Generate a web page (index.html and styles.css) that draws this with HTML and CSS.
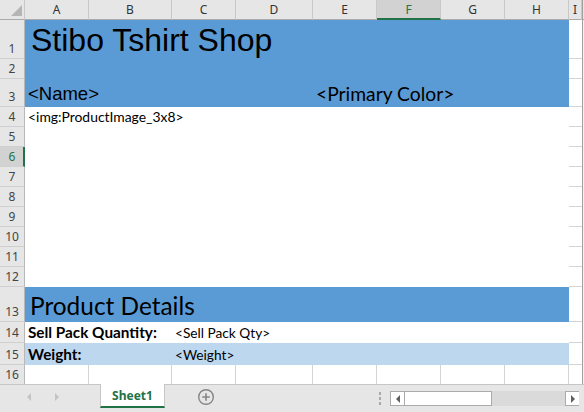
FILE: index.html
```html
<!DOCTYPE html>
<html>
<head>
<meta charset="utf-8">
<link rel="stylesheet" href="styles.css">
</head>
<body>
<div class="app">
  <div class="sheet">
    <div class="row row-head">
      <div class="corner"><svg width="25" height="19" viewBox="0 0 25 19"><polygon points="22,5 22,16 11,16" fill="#b5b5b5"/></svg></div>
      <div class="ch">A</div><div class="ch">B</div><div class="ch">C</div><div class="ch">D</div>
      <div class="ch">E</div><div class="ch ch-sel">F</div><div class="ch">G</div><div class="ch">H</div>
      <div class="ch">I</div><div class="edge-h"></div>
    </div>

    <div class="row row-1">
      <div class="rh">1</div>
      <div class="fill blue"><span class="t-title">Stibo Tshirt Shop</span></div>
      <div class="ci"></div><div class="edge"></div>
    </div>
    <div class="row row-std">
      <div class="rh">2</div>
      <div class="fill blue"></div>
      <div class="ci"></div><div class="edge"></div>
    </div>
    <div class="row row-3">
      <div class="rh">3</div>
      <div class="fill blue split">
        <span class="t-name">&lt;Name&gt;</span>
        <span class="t-color">&lt;Primary Color&gt;</span>
      </div>
      <div class="ci"></div><div class="edge"></div>
    </div>
    <div class="row row-std">
      <div class="rh">4</div>
      <div class="fill white top"><span class="t-img">&lt;img:ProductImage_3x8&gt;</span></div>
      <div class="ci"></div><div class="edge"></div>
    </div>
    <div class="row row-std">
      <div class="rh">5</div><div class="fill white"></div><div class="ci"></div><div class="edge"></div>
    </div>
    <div class="row row-std">
      <div class="rh rh-sel">6</div><div class="fill white"></div><div class="ci"></div><div class="edge"></div>
    </div>
    <div class="row row-std">
      <div class="rh">7</div><div class="fill white"></div><div class="ci"></div><div class="edge"></div>
    </div>
    <div class="row row-std">
      <div class="rh">8</div><div class="fill white"></div><div class="ci"></div><div class="edge"></div>
    </div>
    <div class="row row-std">
      <div class="rh">9</div><div class="fill white"></div><div class="ci"></div><div class="edge"></div>
    </div>
    <div class="row row-std">
      <div class="rh">10</div><div class="fill white"></div><div class="ci"></div><div class="edge"></div>
    </div>
    <div class="row row-std">
      <div class="rh">11</div><div class="fill white"></div><div class="ci"></div><div class="edge"></div>
    </div>
    <div class="row row-std">
      <div class="rh">12</div><div class="fill white"></div><div class="ci"></div><div class="edge"></div>
    </div>
    <div class="row row-13">
      <div class="rh">13</div>
      <div class="fill blue"><span class="t-details">Product Details</span></div>
      <div class="ci"></div><div class="edge"></div>
    </div>
    <div class="row row-14">
      <div class="rh">14</div>
      <div class="fill white kv">
        <span class="t-key">Sell Pack Quantity:</span>
        <span class="t-val">&lt;Sell Pack Qty&gt;</span>
      </div>
      <div class="ci"></div><div class="edge"></div>
    </div>
    <div class="row row-15">
      <div class="rh">15</div>
      <div class="fill light kv">
        <span class="t-key">Weight:</span>
        <span class="t-val">&lt;Weight&gt;</span>
      </div>
      <div class="ci"></div><div class="edge"></div>
    </div>
    <div class="row row-std">
      <div class="rh">16</div>
      <div class="c"></div><div class="c"></div><div class="c"></div><div class="c"></div>
      <div class="c"></div><div class="c"></div><div class="c"></div><div class="c"></div>
      <div class="ci ci-r"></div><div class="edge"></div>
    </div>
  </div>

  <div class="tabbar">
    <div class="nav">
      <svg width="8" height="10" viewBox="0 0 8 10"><polygon points="6,1 6,9 2,5" fill="#c3c3c3"/></svg>
      <svg width="8" height="10" viewBox="0 0 8 10"><polygon points="2,1 2,9 6,5" fill="#c3c3c3"/></svg>
    </div>
    <div class="tab">Sheet1</div>
    <div class="add">
      <svg width="18" height="18" viewBox="0 0 18 18"><circle cx="9" cy="9" r="7.3" fill="none" stroke="#858585" stroke-width="1.4"/><path d="M9 5.2v7.6M5.2 9h7.6" stroke="#858585" stroke-width="1.6"/></svg>
    </div>
    <div class="dots"><i></i><i></i><i></i></div>
    <div class="hscroll">
      <div class="sbtn"><svg width="6" height="8" viewBox="0 0 6 8"><polygon points="5,0 5,8 1,4" fill="#606060"/></svg></div>
      <div class="thumb"></div>
      <div class="track"></div>
      <div class="sbtn sbtn-r"><svg width="6" height="8" viewBox="0 0 6 8"><polygon points="1,0 1,8 5,4" fill="#606060"/></svg></div>
    </div>
  </div>
</div>
</body>
</html>
```
FILE: styles.css
```css
* { box-sizing: border-box; }
html, body { margin: 0; padding: 0; }
body { width: 584px; height: 412px; overflow: hidden; background: #fff; font-family: "Liberation Sans", Arial, sans-serif; }
.app { width: 584px; height: 412px; display: flex; flex-direction: column; }
.sheet { height: 384px; overflow: hidden; flex: none; }

.row {
  display: grid;
  grid-template-columns: 25px 64px 83px 64px 77px 64px 64px 64px 64px 13px 2px;
}
.row-head { height: 20px; }
.row-1 { height: 39px; }
.row-std { height: 20px; }
.row-3 { height: 28px; }
.row-13 { height: 35px; }
.row-14 { height: 21px; }
.row-15 { height: 22px; }

.corner { background: #e6e6e6; border-right: 1px solid #c8c8c8; border-bottom: 1px solid #ababab; }
.corner svg { display: block; }
.ch {
  background: #e6e6e6; border-right: 1px solid #c8c8c8; border-bottom: 1px solid #ababab;
  display: flex; align-items: center; justify-content: center;
  font: 12px "Noto Sans", sans-serif; color: #333; padding-bottom: 1px;
}
.ch-sel { background: #d2d2d2; border-bottom: 2px solid #217346; color: #217346; padding-bottom: 0; }
.edge-h { background: #e6e6e6; border-left: 1px solid #a0a0a0; border-bottom: 1px solid #ababab; }

.rh {
  background: #e6e6e6; border-right: 1px solid #b8b8b8; border-bottom: 1px solid #cfcfcf;
  display: flex; align-items: flex-end; justify-content: center;
  font: 12px/16px "Noto Sans", sans-serif; color: #444; padding-bottom: 1px;
}
.rh-sel { background: #d2d2d2; border-right: 2px solid #217346; color: #217346; padding-left: 1px; }

.fill { grid-column: span 8; display: flex; align-items: flex-end; }
.blue { background: #5b9bd5; }
.white { background: #fff; }
.light { background: #bdd7ee; }
.top { align-items: center; }

.c { border-right: 1px solid #d4d4d4; border-bottom: 1px solid #d4d4d4; }
.ci { border-bottom: 1px solid #d4d4d4; }
.edge { background: #f2f2f2; border-left: 1px solid #a0a0a0; }

.t-title { font-size: 32px; line-height: 1; padding: 0 0 3px 6px; color: #000; white-space: nowrap; }
.split { display: grid; grid-template-columns: 288px 1fr; align-items: end; }
.t-name { font-size: 18.5px; line-height: 1; padding: 0 0 4px 3px; color: #000; }
.t-color { font: 19.3px/1 "Lato", sans-serif; padding: 0 0 4px 3px; color: #000; white-space: nowrap; }
.t-img { font: 13.9px/1 "Lato", sans-serif; padding: 0 0 0 3px; color: #000; white-space: nowrap; }
.t-details { font: 24.4px/1 "Lato", sans-serif; padding: 0 0 4px 5px; color: #000; white-space: nowrap; }
.kv { display: grid; grid-template-columns: 147px 1fr; align-items: end; }
.t-key { font: bold 15.3px/1 "Lato", sans-serif; padding: 0 0 3px 3px; color: #000; white-space: nowrap; }
.t-val { font: 13.7px/1 "Lato", sans-serif; padding: 0 0 3px 3px; color: #000; white-space: nowrap; }

.tabbar {
  flex: 1; background: #e6e6e6; border-top: 1px solid #c6c6c6;
  display: flex; align-items: flex-start;
}
.nav { width: 100px; height: 24px; display: flex; align-items: center; gap: 20px; padding-left: 25px; }
.nav svg { display: block; }
.tab {
  width: 65px; height: 24px; background: #fff;
  border-left: 1px solid #c6c6c6; border-right: 1px solid #c6c6c6; border-bottom: 2px solid #217346;
  font: bold 12px "Noto Sans", sans-serif; color: #217346;
  display: flex; align-items: center; justify-content: center; margin-top: -1px;
}
.add { width: 82px; height: 24px; display: flex; align-items: center; justify-content: center; padding-right: 0; }
.add svg { display: block; }
.dots { width: 18px; margin-left: 124px; padding-top: 7px; display: flex; flex-direction: column; gap: 2px; align-items: center; }
.dots i { width: 2px; height: 3px; background: #a9a9a9; display: block; }
.hscroll { display: flex; margin-left: 1px; margin-top: 6px; height: 15px; }
.sbtn { width: 15px; height: 15px; background: #fff; border: 1px solid #ababab; display: flex; align-items: center; justify-content: center; }
.sbtn svg { display: block; }
.thumb { width: 87px; height: 15px; background: #fff; border: 1px solid #ababab; border-left: none; }
.track { width: 73px; height: 15px; background: #dadada; }
.sbtn-r { width: 14px; border-right: none; }
```
